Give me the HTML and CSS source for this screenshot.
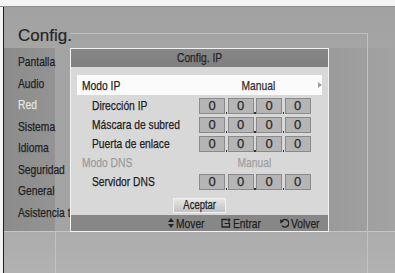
FILE: index.html
```html
<!DOCTYPE html>
<html lang="es">
<head>
    <meta charset="UTF-8">
    <title>Config. IP</title>
    <link rel="stylesheet" href="styles.css">
</head>
<body>
    <div class="strip"></div>
    <div class="screen">
        <div class="title">Config.</div>
        <div class="band">
            <ul class="menu">
                <li><span class="n">Pantalla</span></li>
                <li><span class="n">Audio</span></li>
                <li class="active"><span class="n">Red</span></li>
                <li><span class="n">Sistema</span></li>
                <li><span class="n">Idioma</span></li>
                <li><span class="n">Seguridad</span></li>
                <li><span class="n">General</span></li>
                <li><span class="n">Asistencia técnica</span></li>
            </ul>
            <div class="rest"></div>
        </div>
        <div class="bottom">
            <div class="bottom-left"></div>
        </div>
        <div class="frame"></div>

        <div class="dialog">
            <div class="dlg-head"><span class="n c">Config. IP</span></div>
            <div class="dlg-body">
                <div class="sel-row">
                    <span class="sel-label"><span class="n">Modo IP</span></span>
                    <span class="sel-value"><span class="n c">Manual</span></span>
                    <svg class="sel-arrow" width="4" height="6" viewBox="0 0 4 6"><path d="M0 0 L4 3 L0 6 Z" fill="#a0a0a0"/></svg>
                </div>
                <div class="row">
                    <span class="label"><span class="n">Dirección IP</span></span>
                    <div class="octets">
                        <span class="oct">0</span><span class="dot"></span><span class="oct">0</span><span class="dot"></span><span class="oct">0</span><span class="dot"></span><span class="oct">0</span>
                    </div>
                </div>
                <div class="row">
                    <span class="label"><span class="n">Máscara de subred</span></span>
                    <div class="octets">
                        <span class="oct">0</span><span class="dot"></span><span class="oct">0</span><span class="dot"></span><span class="oct">0</span><span class="dot"></span><span class="oct">0</span>
                    </div>
                </div>
                <div class="row">
                    <span class="label"><span class="n">Puerta de enlace</span></span>
                    <div class="octets">
                        <span class="oct">0</span><span class="dot"></span><span class="oct">0</span><span class="dot"></span><span class="oct">0</span><span class="dot"></span><span class="oct">0</span>
                    </div>
                </div>
                <div class="row dim">
                    <span class="label"><span class="n">Modo DNS</span></span>
                    <span class="value"><span class="n c">Manual</span></span>
                </div>
                <div class="row">
                    <span class="label"><span class="n">Servidor DNS</span></span>
                    <div class="octets">
                        <span class="oct">0</span><span class="dot"></span><span class="oct">0</span><span class="dot"></span><span class="oct">0</span><span class="dot"></span><span class="oct">0</span>
                    </div>
                </div>
                <div class="btn-wrap"><span class="btn"><span class="n c">Aceptar</span></span></div>
            </div>
            <div class="dlg-foot">
                <svg class="ico" width="6" height="10" viewBox="0 0 6 10"><path d="M3 0 L6 4 L0 4 Z M0 6 L6 6 L3 10 Z" fill="#222"/></svg>
                <span class="hint w-mover"><span class="n">Mover</span></span>
                <svg class="ico" width="10" height="10" viewBox="0 0 10 10"><path d="M6.5 1.5 H1 V9 H8.5 V5" fill="none" stroke="#222" stroke-width="1.3"/><path d="M3.5 5.5 H8 V1.5" fill="none" stroke="#222" stroke-width="1.1"/><path d="M8 0 L10 2.4 H6 Z" fill="#222"/></svg>
                <span class="hint w-entrar"><span class="n">Entrar</span></span>
                <svg class="ico" width="9" height="10" viewBox="0 0 9 10"><path d="M2 3 A3.8 3.8 0 1 1 2 7.6" fill="none" stroke="#222" stroke-width="1.4"/><path d="M0 1.3 L3.8 3.6 L0.4 5.4 Z" fill="#222"/></svg>
                <span class="hint w-volver"><span class="n">Volver</span></span>
            </div>
        </div>
    </div>
</body>
</html>
```

FILE: styles.css
```css
html, body {
    margin: 0;
    padding: 0;
}
body {
    width: 395px;
    height: 273px;
    overflow: hidden;
    background: #f3f3f3;
    font-family: "Liberation Sans", Arial, sans-serif;
    color: #222;
}
/* condensed look of the TV font */
.n {
    display: inline-block;
    white-space: nowrap;
    transform: scaleX(0.79);
    transform-origin: 0 50%;
    -webkit-text-stroke: 0.25px currentColor;
}
.n.c {
    transform-origin: 50% 50%;
}
.strip {
    height: 6px;
    background: #f4f4f4;
    border-bottom: 1px solid #8f8f8f;
}
.screen {
    position: relative;
    margin-left: 3px;
    height: 266px;
    border-left: 1px solid #1e1e1e;
    background: linear-gradient(to bottom, #a2a2a2, #b3b3b3);
    display: flex;
    flex-direction: column;
}
.title {
    height: 41px;
    box-sizing: border-box;
    padding: 19px 0 0 14px;
    font-size: 17px;
    line-height: 20px;
    color: #252525;
    -webkit-text-stroke: 0.2px #252525;
}
.band {
    height: 183px;
    display: flex;
}
.menu {
    list-style: none;
    margin: 0;
    padding: 3px 0 0 14px;
    width: 37px;
    background: linear-gradient(to right, #8c8c8c, #939393);
    font-size: 13px;
    line-height: 21.5px;
    white-space: nowrap;
}
.menu li.active {
    color: #e4e4e4;
}
.rest {
    flex: 1;
    background: linear-gradient(to right, #a4a4a4 0, #9f9f9f 30%, #9a9a9a 80%, #a3a3a3 100%);
}
.bottom {
    flex: 1;
    display: flex;
    border-top: 1px solid #c6c6c6;
    background: linear-gradient(to bottom, #acacac, #b2b2b2);
}
.bottom-left {
    width: 51px;
    border-right: 1px solid #c2c2c2;
}
.frame {
    position: absolute;
    left: 66px;
    top: 26px;
    width: 297px;
    height: 240px;
    border-top: 1px solid #bdbdbd;
    border-right: 1px solid #c2c2c2;
    pointer-events: none;
}
.dialog {
    position: absolute;
    left: 66px;
    top: 41px;
    width: 259px;
    height: 184px;
    box-sizing: border-box;
    border: 1px solid #f2f2f2;
    background: #d8d8d8;
    display: flex;
    flex-direction: column;
    font-size: 13px;
}
.dlg-head {
    height: 18px;
    line-height: 18px;
    text-align: center;
    background: linear-gradient(to bottom, #878787, #7f7f7f);
    color: #262626;
}
.dlg-body {
    padding-top: 8px;
}
.sel-row {
    margin: 0 6px;
    height: 20px;
    background: #fbfbfb;
    display: flex;
    align-items: center;
}
.sel-label {
    width: 119px;
    padding-left: 5px;
    color: #1c1c1c;
}
.sel-value {
    width: 116px;
    text-align: center;
    color: #2c2c2c;
}
.sel-arrow {
    margin-left: 2px;
}
.row {
    height: 19px;
    display: flex;
    align-items: center;
}
.sel-row + .row {
    margin-top: 1px;
}
.label {
    width: 104px;
    padding-left: 21px;
    color: #222;
    white-space: nowrap;
}
.octets {
    display: flex;
    margin-left: 3px;
}
.oct {
    width: 26px;
    height: 16px;
    box-sizing: border-box;
    border: 1px solid #8a8a8a;
    background: #b5b5b5;
    text-align: center;
    line-height: 14px;
    color: #2a2a2a;
    -webkit-text-stroke: 0.25px #2a2a2a;
}
.dot {
    width: 2.5px;
    position: relative;
}
.dot::after {
    content: "";
    position: absolute;
    left: 0.5px;
    bottom: 0;
    width: 1.5px;
    height: 1.5px;
    background: #333;
}
.row.dim .label {
    padding-left: 11px;
    width: 114px;
    color: #9b9b9b;
}
.row.dim .value {
    width: 116px;
    text-align: center;
    color: #a0a0a0;
}
.btn-wrap {
    margin-top: 7px;
    display: flex;
    justify-content: center;
}
.btn {
    width: 53px;
    height: 15px;
    box-sizing: border-box;
    border: 1px solid #f0f0f0;
    background: linear-gradient(to bottom, #e4e4e4, #c4c4c4);
    text-align: center;
    font-size: 12px;
    line-height: 13px;
    color: #222;
}
.dlg-foot {
    margin-top: auto;
    height: 16px;
    background: #878787;
    display: flex;
    justify-content: flex-end;
    align-items: center;
    padding-right: 7px;
    font-size: 13px;
    color: #222;
}
.ico {
    margin-right: 2px;
}
.hint {
    white-space: nowrap;
}
.w-mover {
    width: 35px;
    margin-right: 10px;
}
.w-entrar {
    width: 36px;
    margin-right: 11px;
}
.w-volver {
    width: 30px;
}
```
